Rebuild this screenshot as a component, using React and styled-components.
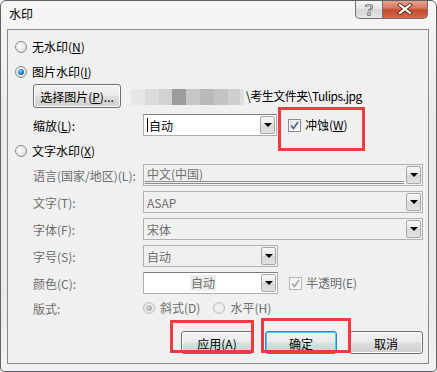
import React from 'react';
import styled, { createGlobalStyle, css } from 'styled-components';

const GlobalStyle = createGlobalStyle`
  html, body { margin: 0; padding: 0; background: #ffffff; }
  body {
    font-family: "Noto Sans CJK SC", "Noto Sans", sans-serif;
    font-size: 12px;
    color: #000;
  }
  u { text-underline-offset: 1px; }
`;

const Window = styled.div`
  position: relative;
  width: 437px;
  height: 372px;
  box-sizing: border-box;
  display: flex;
  flex-direction: column;
  border: 1px solid #606266;
  border-radius: 6px 6px 4px 4px;
  background: linear-gradient(180deg, #f6f6f6 0%, #ececec 30%, #eaeaea 80%, #f2f2f2 100%);
  overflow: hidden;
`;

const TitleBar = styled.div`
  height: 28px;
  display: flex;
  justify-content: space-between;
  align-items: flex-start;
`;

const Title = styled.div`
  margin: 4px 0 0 8px;
  line-height: 18px;
  font-size: 12px;
`;

const Captions = styled.div`
  display: flex;
  margin: -1px 8px 0 0;
`;

const CaptionButton = styled.div`
  height: 19px;
  width: ${(p) => p.w}px;
  box-sizing: border-box;
  display: flex;
  align-items: center;
  justify-content: center;
  border: 1px solid #6c6f74;
  border-top: none;
  ${(p) =>
    p.close
      ? css`
          border-radius: 0 0 5px 0;
          background: linear-gradient(180deg, #eaa795 0%, #d9795f 45%, #c6492c 55%, #d3694b 100%);
        `
      : css`
          border-right: none;
          border-radius: 0 0 0 5px;
          background: linear-gradient(180deg, #f7f7f7 0%, #e7e7e7 45%, #d6d6d6 55%, #e6e6e6 100%);
        `}
`;

const Client = styled.div`
  flex: 1;
  margin: 0 7px 7px 6px;
  border: 1px solid #878a90;
  background: #f0f0f0;
  display: flex;
  flex-direction: column;
  padding: 0 5px 0 6px;
`;

const Row = styled.div`
  display: flex;
  align-items: center;
  height: ${(p) => p.h || 20}px;
  margin-top: ${(p) => p.mt || 0}px;
  padding-left: ${(p) => p.indent || 0}px;
  justify-content: ${(p) => (p.end ? 'flex-end' : 'flex-start')};
  gap: ${(p) => p.gap || 0}px;
`;

const Text = styled.span`
  white-space: nowrap;
  line-height: 16px;
  color: ${(p) => (p.disabled ? '#6d6d6d' : '#000')};
  margin-left: ${(p) => p.ml || 0}px;
  letter-spacing: ${(p) => p.ls || 0}px;
`;

const FieldLabel = styled.span`
  width: 110px;
  flex: none;
  white-space: nowrap;
  color: ${(p) => (p.disabled ? '#6d6d6d' : '#000')};
`;

const RadioCircle = styled.span`
  width: 12px;
  height: 12px;
  flex: none;
  box-sizing: border-box;
  border-radius: 50%;
  border: 1px solid ${(p) => (p.disabled ? '#b8b8b8' : '#8a8c90')};
  background: ${(p) =>
    p.disabled
      ? 'radial-gradient(circle at 50% 50%, #f4f4f4 0%, #e6e6e6 100%)'
      : 'radial-gradient(circle at 40% 35%, #ffffff 0%, #e8e8e8 55%, #cfcfcf 100%)'};
  display: flex;
  align-items: center;
  justify-content: center;
  &::after {
    content: '';
    display: ${(p) => (p.checked ? 'block' : 'none')};
    width: 6px;
    height: 6px;
    border-radius: 50%;
    background: ${(p) =>
      p.disabled
        ? 'radial-gradient(circle at 40% 35%, #d8d8d8, #9a9a9a)'
        : 'radial-gradient(circle at 40% 35%, #7fd0f7 0%, #1f7ec4 50%, #0b4f8e 100%)'};
  }
`;

const Radio = ({ checked, disabled, label, ml = 6, gap = 5 }) => (
  <>
    <RadioCircle checked={checked} disabled={disabled} style={{ marginLeft: ml }} />
    <Text disabled={disabled} ml={gap}>{label}</Text>
  </>
);

const CheckBox = styled.span`
  width: 13px;
  height: 13px;
  flex: none;
  box-sizing: border-box;
  border: 1px solid ${(p) => (p.disabled ? '#b4b4b4' : '#8a8c90')};
  background: ${(p) => (p.disabled ? '#f4f4f4' : 'linear-gradient(135deg, #dcdcdc, #ffffff)')};
  box-shadow: inset 0 0 0 1px #f6f6f6;
  display: flex;
  align-items: center;
  justify-content: center;
  margin-left: ${(p) => p.ml || 0}px;
`;

const Check = ({ color }) => (
  <svg width="9" height="9" viewBox="0 0 9 9">
    <path d="M1 4.5 L3.5 7.5 L8 1" fill="none" stroke={color} strokeWidth="1.6" />
  </svg>
);

const Combo = styled.div`
  width: ${(p) => p.w}px;
  height: 22px;
  box-sizing: border-box;
  flex: none;
  display: flex;
  border: 1px solid ${(p) => (p.disabled ? '#adb2b5' : '#abadb3')};
  border-top-color: ${(p) => (p.disabled ? '#adb2b5' : '#7a7d84')};
  background: ${(p) => (p.disabled ? '#f0f0f0' : '#ffffff')};
  padding: 1px;
`;

const ComboText = styled.div`
  flex: 1;
  display: flex;
  align-items: center;
  justify-content: ${(p) => (p.center ? 'center' : 'flex-start')};
  padding-left: ${(p) => (p.center ? 0 : 2)}px;
  color: ${(p) => (p.disabled ? '#6d6d6d' : '#000')};
  white-space: nowrap;
  ${(p) =>
    p.underline &&
    css`
      margin-right: 2px;
      border-bottom: 3px double #8d8d8d;
    `}
`;

const Caret = styled.span`
  width: 1px;
  height: 14px;
  background: #000;
  margin-right: 1px;
`;

const HighlightBox = styled.span`
  background: #ececec;
  padding: 0 1px;
  line-height: 16px;
`;

const DropButton = styled.div`
  width: 15px;
  flex: none;
  box-sizing: border-box;
  border: 1px solid #a8a8a8;
  border-radius: 2px;
  background: linear-gradient(180deg, #f6f6f6 0%, #e8e8e8 50%, #d8d8d8 52%, #e2e2e2 100%);
  display: flex;
  align-items: center;
  justify-content: center;
  &::after {
    content: '';
    border-left: 4px solid transparent;
    border-right: 4px solid transparent;
    border-top: 4px solid #000;
  }
`;

const Button = styled.div`
  width: ${(p) => p.w || 72}px;
  height: ${(p) => p.h || 23}px;
  box-sizing: border-box;
  flex: none;
  display: flex;
  align-items: center;
  justify-content: center;
  border: 1px solid ${(p) => (p.focused ? '#3c7fb1' : '#707070')};
  border-radius: 3px;
  background: linear-gradient(180deg, #f2f2f2 0%, #ebebeb 45%, #dddddd 55%, #cfcfcf 100%);
  box-shadow: inset 0 0 0 1px ${(p) => (p.focused ? '#48d1fb' : '#fbfbfb')};
  white-space: nowrap;
  padding-top: 1px;
`;

const Mosaic = styled.div`
  display: flex;
  height: 16px;
  margin: 5px 2px 0 2px;
  align-self: flex-start;
`;

const Tile = styled.span`
  width: ${(p) => p.w}px;
  background: ${(p) => p.c};
`;

const Annotation = styled.div`
  position: absolute;
  left: ${(p) => p.x}px;
  top: ${(p) => p.y}px;
  width: ${(p) => p.w}px;
  height: ${(p) => p.h}px;
  box-sizing: border-box;
  border: 3px solid #ee3a40;
  pointer-events: none;
`;

const tiles = [
  [8, '#f0f0f0'], [14, '#e6e6e6'], [14, '#dcdcdc'], [13, '#d2d2d2'], [14, '#9c9c9c'],
  [14, '#c6c6c6'], [14, '#b9b9b9'], [14, '#c3c3c3'], [12, '#cfcfcf'], [4, '#dedede'],
];

export default function App() {
  return (
    <>
      <GlobalStyle />
      <Window>
        <TitleBar>
          <Title>水印</Title>
          <Captions>
            <CaptionButton w={27}>
              <svg width="10" height="13" viewBox="0 0 10 13">
                <path d="M2 4 C2 1.5 8 1.5 8 4 C8 6 5 6 5 8.5" fill="none" stroke="#555" strokeWidth="2.4" />
                <path d="M2 4 C2 1.5 8 1.5 8 4 C8 6 5 6 5 8.5" fill="none" stroke="#fff" strokeWidth="1" />
                <rect x="3.8" y="10" width="2.4" height="2.4" fill="#fff" stroke="#555" strokeWidth="0.8" />
              </svg>
            </CaptionButton>
            <CaptionButton w={46} close>
              <svg width="16" height="12" viewBox="0 0 16 12">
                <path d="M3 2 L13 10 M13 2 L3 10" stroke="#5a2a1e" strokeWidth="4" strokeLinecap="square" />
                <path d="M3 2 L13 10 M13 2 L3 10" stroke="#ffffff" strokeWidth="2.2" strokeLinecap="square" />
              </svg>
            </CaptionButton>
          </Captions>
        </TitleBar>

        <Client>
          <Row mt={7}>
            <Radio ml={1} gap={5} label={<>无水印(<u>N</u>)</>} />
          </Row>
          <Row mt={5}>
            <Radio ml={1} gap={5} checked label={<>图片水印(<u>I</u>)</>} />
          </Row>
          <Row mt={2} h={24} indent={19}>
            <Button w={88} h={24}>选择图片(<u>P</u>)...</Button>
            <Mosaic>
              {tiles.map(([w, c], i) => (
                <Tile key={i} w={w} c={c} />
              ))}
            </Mosaic>
            <Text ls={-0.5}>\考生文件夹\Tulips.jpg</Text>
          </Row>
          <Row mt={6} h={22} indent={19}>
            <FieldLabel>缩放(<u>L</u>):</FieldLabel>
            <Combo w={134}>
              <ComboText>
                <Caret />
                自动
              </ComboText>
              <DropButton />
            </Combo>
            <CheckBox ml={11}>
              <Check color="#4a5f8c" />
            </CheckBox>
            <Text ml={4}>冲蚀(<u>W</u>)</Text>
          </Row>
          <Row mt={5}>
            <Radio ml={1} gap={5} label={<>文字水印(<u>X</u>)</>} />
          </Row>
          <Row mt={3} h={22} indent={19}>
            <FieldLabel disabled>语言(国家/地区)(L):</FieldLabel>
            <Combo w={280} disabled>
              <ComboText disabled underline>中文(中国)</ComboText>
              <DropButton />
            </Combo>
          </Row>
          <Row mt={5} h={22} indent={19}>
            <FieldLabel disabled>文字(T):</FieldLabel>
            <Combo w={280} disabled>
              <ComboText disabled>ASAP</ComboText>
              <DropButton />
            </Combo>
          </Row>
          <Row mt={5} h={22} indent={19}>
            <FieldLabel disabled>字体(F):</FieldLabel>
            <Combo w={280} disabled>
              <ComboText disabled>宋体</ComboText>
              <DropButton />
            </Combo>
          </Row>
          <Row mt={5} h={22} indent={19}>
            <FieldLabel disabled>字号(S):</FieldLabel>
            <Combo w={135} disabled>
              <ComboText disabled>自动</ComboText>
              <DropButton />
            </Combo>
          </Row>
          <Row mt={5} h={22} indent={19}>
            <FieldLabel disabled>颜色(C):</FieldLabel>
            <Combo w={135}>
              <ComboText center disabled>
                <HighlightBox>自动</HighlightBox>
              </ComboText>
              <DropButton />
            </Combo>
            <CheckBox ml={11} disabled>
              <Check color="#a8a8a8" />
            </CheckBox>
            <Text ml={4} disabled>半透明(E)</Text>
          </Row>
          <Row mt={4} indent={19}>
            <FieldLabel disabled>版式:</FieldLabel>
            <Radio ml={0} gap={5} checked disabled label="斜式(D)" />
            <Radio ml={13} gap={5} disabled label="水平(H)" />
          </Row>
          <Row mt={13} h={23} end gap={12}>
            <Button>应用(A)</Button>
            <Button focused>确定</Button>
            <Button w={74}>取消</Button>
          </Row>
        </Client>

        <Annotation x={277} y={106} w={87} h={44} />
        <Annotation x={169} y={319} w={84} h={33} />
        <Annotation x={260} y={317} w={90} h={35} />
      </Window>
    </>
  );
}
